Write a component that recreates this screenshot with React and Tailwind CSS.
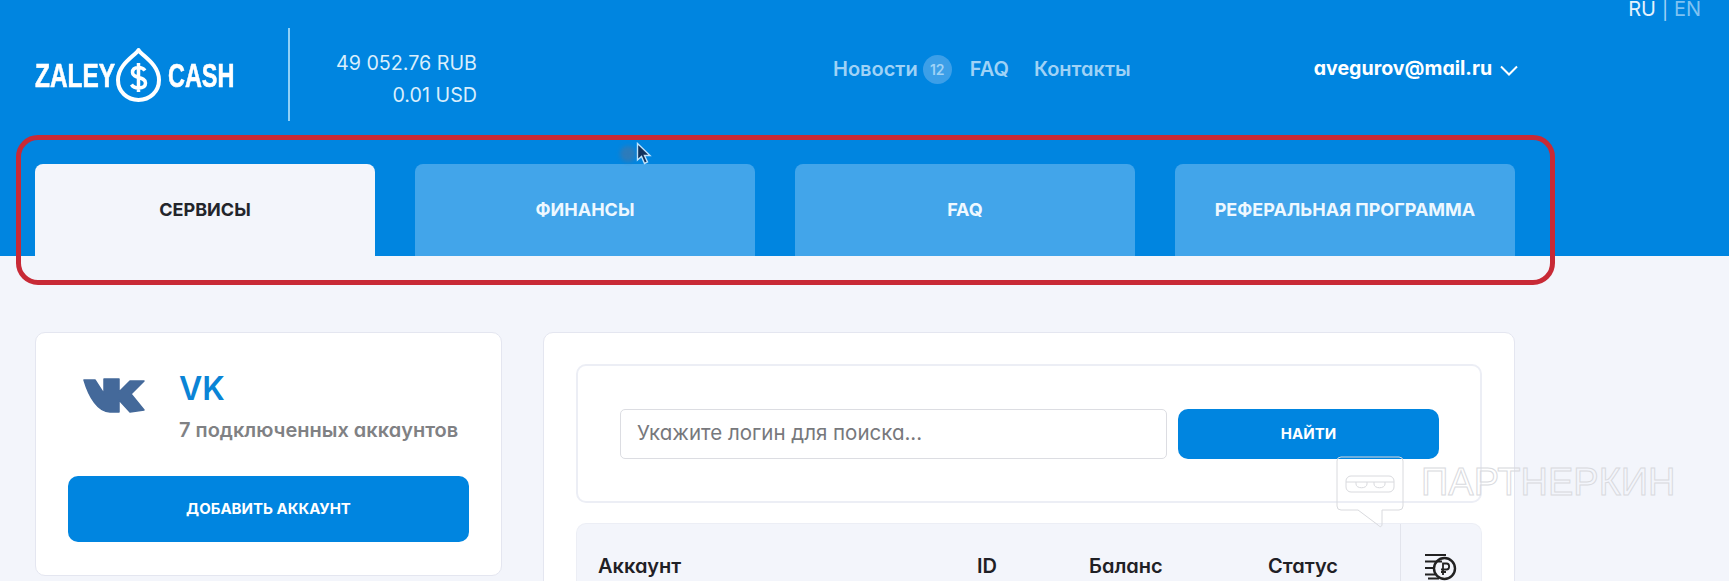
const tabs = ['ФИНАНСЫ', 'FAQ', 'РЕФЕРАЛЬНАЯ ПРОГРАММА'];

function Drop() {
  return (
    <svg width="47" height="56" viewBox="0 0 47 56" fill="none" stroke="currentColor">
      <path d="M23.5 3 C27 9 44 17 44 33 C44 44.5 35 53 23.5 53 C12 53 3 44.5 3 33 C3 17 20 9 23.5 3 Z" strokeWidth="4" strokeLinejoin="round" />
      <path d="M30 23.5 C28.5 21.5 26.5 20.5 23.5 20.5 C19.5 20.5 17.5 22.5 17.5 25.5 C17.5 32 30.5 29 30.5 36 C30.5 39 28 41 23.5 41 C20.5 41 18 40 16.5 37.5 M23.5 16 V45" strokeWidth="3.5" />
    </svg>
  );
}

function VkLogo() {
  return (
    <svg width="62" height="36" viewBox="0 0 62 36" fill="#44699a" stroke="#44699a" strokeWidth="1.5" strokeLinejoin="round">
      <path d="M1 3H12L21 17V2H36V15L47 4H61L48 17L61 33L47 35L36 23V35H27C15 35 6 20 1 3Z" />
    </svg>
  );
}

function CoinsIcon() {
  return (
    <svg width="34" height="28" viewBox="0 0 34 28" fill="none" stroke="#222" strokeWidth="2" className="shrink-0">
      <path d="M0 2H21M0 8.5H17M0 15H9M0 21.5H10M3 25.5H14" />
      <circle cx="19.5" cy="15.5" r="10.5" strokeWidth="2.4" />
      <path d="M18 22V10.5H21.5C25 10.5 25 16.5 21.5 16.5H16M16 19H21" strokeWidth="1.8" />
    </svg>
  );
}

export default function App() {
  return (
    <div className="relative h-[581px] overflow-hidden bg-[#f3f5fb] font-['Inter',sans-serif] [font-feature-settings:'cv11']">
      <header className="h-[256px] bg-[#0085e0] flex flex-col">
        <div className="h-[164px] flex items-start pl-[35px] text-white">
          <div className="flex items-center w-[198px] h-[56px] mt-[47px] text-white font-['Liberation_Sans_Narrow','Liberation_Sans',sans-serif] font-bold text-[33px] leading-none [-webkit-text-stroke:0.6px_white]">
            <span className="w-[80px] inline-block origin-left scale-x-[.74]">ZALEY</span>
            <span className="shrink-0 [-webkit-text-stroke:0]"><Drop /></span>
            <span className="ml-[6px] inline-block origin-left scale-x-[.71]">CASH</span>
          </div>
          <div className="w-[2px] h-[93px] mt-[28px] ml-[55px] bg-[#8fd0f7]" />
          <div className="w-[187px] mt-[47px] text-right text-[#d9eefc] text-[19.700px] leading-[32px]">
            <div>49 052.76 RUB</div>
            <div>0.01 USD</div>
          </div>
          <nav className="flex items-center mt-[54px] ml-[356px] h-[30px] text-[#9fd2f6] text-[20px] font-semibold">
            <span>Новости</span>
            <span className="ml-[5px] w-[29px] h-[29px] rounded-full bg-[#3c9fe8] flex items-center justify-center text-[14px]">12</span>
            <span className="ml-[18px]">FAQ</span>
            <span className="ml-[25px]">Контакты</span>
          </nav>
          <div className="flex items-center mt-[54px] ml-[183px] h-[30px] text-[19.600px] font-bold">
            <span>avegurov@mail.ru</span>
            <svg width="18" height="11" viewBox="0 0 18 11" fill="none" stroke="currentColor" strokeWidth="2" className="ml-[8px] mt-[3px]">
              <path d="M1 1.5L9 9.5L17 1.5" />
            </svg>
          </div>
          <div className="ml-auto mr-[28px] -mt-[5px] text-[20px] leading-[28px] text-[#e4f3fd]">
            RU <span className="text-[#9fd2f6]">|</span> <span className="text-[#7fc2f2]">EN</span>
          </div>
        </div>
        <div className="h-[92px] flex gap-[40px] pl-[35px] text-[18px] font-bold">
          <div className="w-[340px] rounded-t-[8px] bg-[#f3f5fb] text-[#23252b] flex items-center justify-center pb-[1px]">СЕРВИСЫ</div>
          {tabs.map((t) => (
            <div key={t} className="w-[340px] rounded-t-[8px] bg-[#42a5ea] text-[#eef8ff] flex items-center justify-center pb-[1px]">{t}</div>
          ))}
        </div>
      </header>

      <main className="flex items-start gap-[41px] pl-[35px] pt-[76px]">
        <section className="w-[467px] h-[244px] bg-white border border-[#e4e6f0] rounded-[10px] pt-[37px] px-[32px]">
          <div className="flex">
            <div className="w-[111px] pl-[15px] pt-[7px]"><VkLogo /></div>
            <div>
              <div className="text-[32px] leading-[38px] font-semibold text-[#0a84d6]">VK</div>
              <div className="mt-[7px] text-[20px] font-semibold text-[#808184]">7 подключенных аккаунтов</div>
            </div>
          </div>
          <button className="mt-[31px] w-[401px] h-[66px] rounded-[10px] bg-[#0085e0] text-white text-[15px] font-bold">ДОБАВИТЬ АККАУНТ</button>
        </section>

        <section className="w-[972px] h-[300px] bg-white border border-[#e4e6f0] rounded-[10px] pt-[31px] px-[32px]">
          <div className="h-[139px] border-2 border-[#eceef5] rounded-[10px] pl-[42px] flex items-center gap-[11px]">
            <div className="w-[547px] h-[50px] border border-[#dcdde2] rounded-[5px] pl-[16px] flex items-center text-[20.500px] text-[#77787c]">Укажите логин для поиска...</div>
            <button className="w-[261px] h-[50px] pt-[2px] rounded-[10px] bg-[#0085e0] text-white text-[15px] font-bold">НАЙТИ</button>
          </div>
          <div className="mt-[20px] h-[80px] bg-[#f3f5fb] border-t border-x border-[#eceef5] rounded-t-[10px] flex text-[20px] font-semibold text-[#1f2025]">
            <div className="w-[400px] pl-[21px] pt-[27px]">Аккаунт</div>
            <div className="w-[112px] pt-[27px]">ID</div>
            <div className="w-[179px] pt-[27px]">Баланс</div>
            <div className="w-[132px] pt-[27px]">Статус</div>
            <div className="border-l border-[#e2e4ec] pl-[24px] pt-[29px]"><CoinsIcon /></div>
          </div>
        </section>
      </main>

      {/* red marker drawn over the tabs */}
      <div className="absolute left-[16px] top-[135px] w-[1539px] h-[150px] border-[5px] border-[#c82a36] rounded-[22px] pointer-events-none" />

      {/* cursor */}
      <div className="absolute left-[620px] top-[146px] w-[16px] h-[16px] rounded-full bg-[#3f78ac] opacity-70 blur-[2px]" />
      <svg className="absolute left-[636px] top-[142px]" width="16" height="24" viewBox="0 0 16 24">
        <path d="M1.5 1.5V18L5.5 14.5L8.5 21.5L11.5 20L8.5 13.5H14Z" fill="#12325c" stroke="#bfe3fb" strokeWidth="1.4" />
      </svg>

      {/* watermark */}
      <svg className="absolute left-[1336px] top-[456px]" width="68" height="72" viewBox="0 0 68 72" fill="none" stroke="#d9dade" strokeWidth="1">
        <path d="M5 1H63A4 4 0 0 1 67 5V50A4 4 0 0 1 63 54H46V68C46 71 44 71.500 42 69L22 54H5A4 4 0 0 1 1 50V5A4 4 0 0 1 5 1Z" />
        <rect x="10" y="20" width="48" height="16" rx="5" />
        <path d="M10 26H58M20 26V28C20 33 31 33 31 28V26M38 26V28C38 33 49 33 49 28V26" />
      </svg>
      <div className="absolute left-[1421px] top-[460px] text-[38px] leading-[44px] font-['Liberation_Sans',sans-serif] text-transparent [-webkit-text-stroke:1px_#d9dade]">ПАРТНЕРКИН</div>
    </div>
  );
}
